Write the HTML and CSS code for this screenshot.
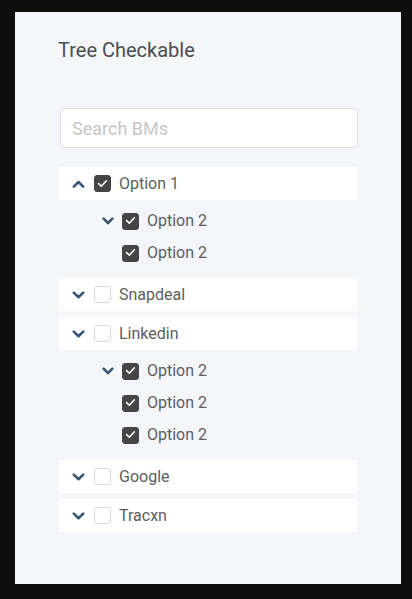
FILE: index.html
```html
<!DOCTYPE html>
<html>
<head>
<meta charset="utf-8">
<link rel="stylesheet" href="styles.css">
</head>
<body>
<div class="panel">
  <h1 class="title">Tree Checkable</h1>
  <input class="search" type="text" placeholder="Search BMs">
  <div class="tree">
    <div class="node">
      <div class="row parent">
        <svg class="chev" width="13" height="8" viewBox="0 0 13 8"><polyline points="1.8,6.6 6.5,2 11.2,6.6"/></svg>
        <span class="box checked"><svg width="17" height="17" viewBox="0 0 17 17"><polyline points="4.6,8.6 7.3,11.3 12.4,5.8"/></svg></span>
        <span class="label">Option 1</span>
      </div>
      <div class="children">
        <div class="row child">
          <svg class="chev" width="12" height="8" viewBox="0 0 12 8"><polyline points="1.6,1.6 6,6 10.4,1.6"/></svg>
          <span class="box checked"><svg width="17" height="17" viewBox="0 0 17 17"><polyline points="4.6,8.6 7.3,11.3 12.4,5.8"/></svg></span>
          <span class="label">Option 2</span>
        </div>
        <div class="row child">
          <span class="spacer"></span>
          <span class="box checked"><svg width="17" height="17" viewBox="0 0 17 17"><polyline points="4.6,8.6 7.3,11.3 12.4,5.8"/></svg></span>
          <span class="label">Option 2</span>
        </div>
      </div>
    </div>
    <div class="node">
      <div class="row parent">
        <svg class="chev" width="13" height="8" viewBox="0 0 13 8"><polyline points="1.8,1.6 6.5,6.2 11.2,1.6"/></svg>
        <span class="box"></span>
        <span class="label">Snapdeal</span>
      </div>
    </div>
    <div class="node">
      <div class="row parent">
        <svg class="chev" width="13" height="8" viewBox="0 0 13 8"><polyline points="1.8,1.6 6.5,6.2 11.2,1.6"/></svg>
        <span class="box"></span>
        <span class="label">Linkedin</span>
      </div>
      <div class="children">
        <div class="row child">
          <svg class="chev" width="12" height="8" viewBox="0 0 12 8"><polyline points="1.6,1.6 6,6 10.4,1.6"/></svg>
          <span class="box checked"><svg width="17" height="17" viewBox="0 0 17 17"><polyline points="4.6,8.6 7.3,11.3 12.4,5.8"/></svg></span>
          <span class="label">Option 2</span>
        </div>
        <div class="row child">
          <span class="spacer"></span>
          <span class="box checked"><svg width="17" height="17" viewBox="0 0 17 17"><polyline points="4.6,8.6 7.3,11.3 12.4,5.8"/></svg></span>
          <span class="label">Option 2</span>
        </div>
        <div class="row child">
          <span class="spacer"></span>
          <span class="box checked"><svg width="17" height="17" viewBox="0 0 17 17"><polyline points="4.6,8.6 7.3,11.3 12.4,5.8"/></svg></span>
          <span class="label">Option 2</span>
        </div>
      </div>
    </div>
    <div class="node">
      <div class="row parent">
        <svg class="chev" width="13" height="8" viewBox="0 0 13 8"><polyline points="1.8,1.6 6.5,6.2 11.2,1.6"/></svg>
        <span class="box"></span>
        <span class="label">Google</span>
      </div>
    </div>
    <div class="node">
      <div class="row parent">
        <svg class="chev" width="13" height="8" viewBox="0 0 13 8"><polyline points="1.8,1.6 6.5,6.2 11.2,1.6"/></svg>
        <span class="box"></span>
        <span class="label">Tracxn</span>
      </div>
    </div>
  </div>
</div>
</body>
</html>
```

FILE: styles.css
```css
html, body {
  margin: 0;
  padding: 0;
  background: #0e0e0e;
}
body {
  font-family: Roboto, "Liberation Sans", sans-serif;
  padding: 12px 11px 15px 15px;
}
.panel {
  box-sizing: border-box;
  width: 386px;
  height: 572px;
  background: #f5f6fa;
  padding: 26px 44px 0 44px;
  display: flex;
  flex-direction: column;
}
.title {
  margin: 0 0 46px -1px;
  font-size: 20px;
  line-height: 24px;
  font-weight: 400;
  color: #4d4d4d;
}
.search {
  box-sizing: border-box;
  width: 298px;
  height: 40px;
  margin: 0 0 19px 1px;
  border: 1px solid #dedede;
  border-radius: 3px;
  background: #fff;
  padding: 0 11px;
  font-family: Roboto, "Liberation Sans", sans-serif;
  font-size: 18px;
  color: #555;
  outline: none;
}
.search::placeholder {
  color: #c6c6c6;
}
.tree {
  display: flex;
  flex-direction: column;
  gap: 6px;
}
.row {
  display: flex;
  align-items: center;
  font-size: 16px;
  color: #5e5e5e;
}
.parent {
  height: 33px;
  background: #fff;
  padding-left: 13px;
}
.children {
  padding: 5px 0 3px 0;
}
.child {
  height: 32px;
  padding-left: 43px;
}
.chev {
  flex: none;
  margin-right: 9px;
}
.child .chev {
  margin-right: 8px;
}
.chev polyline {
  fill: none;
  stroke: #3b5675;
  stroke-width: 2.6;
  stroke-linecap: round;
  stroke-linejoin: round;
}
.spacer {
  width: 12px;
  margin-right: 8px;
  flex: none;
}
.box {
  box-sizing: border-box;
  flex: none;
  width: 17px;
  height: 17px;
  border: 1.5px solid #d6d9df;
  border-radius: 3px;
  background: #fff;
  margin-right: 8px;
  position: relative;
}
.box.checked {
  background: #454545;
  border-color: #454545;
}
.box svg {
  position: absolute;
  left: -1.5px;
  top: -1.5px;
}
.box polyline {
  fill: none;
  stroke: #fff;
  stroke-width: 1.6;
  stroke-linecap: round;
  stroke-linejoin: round;
}
.label {
  line-height: 1;
}
```
